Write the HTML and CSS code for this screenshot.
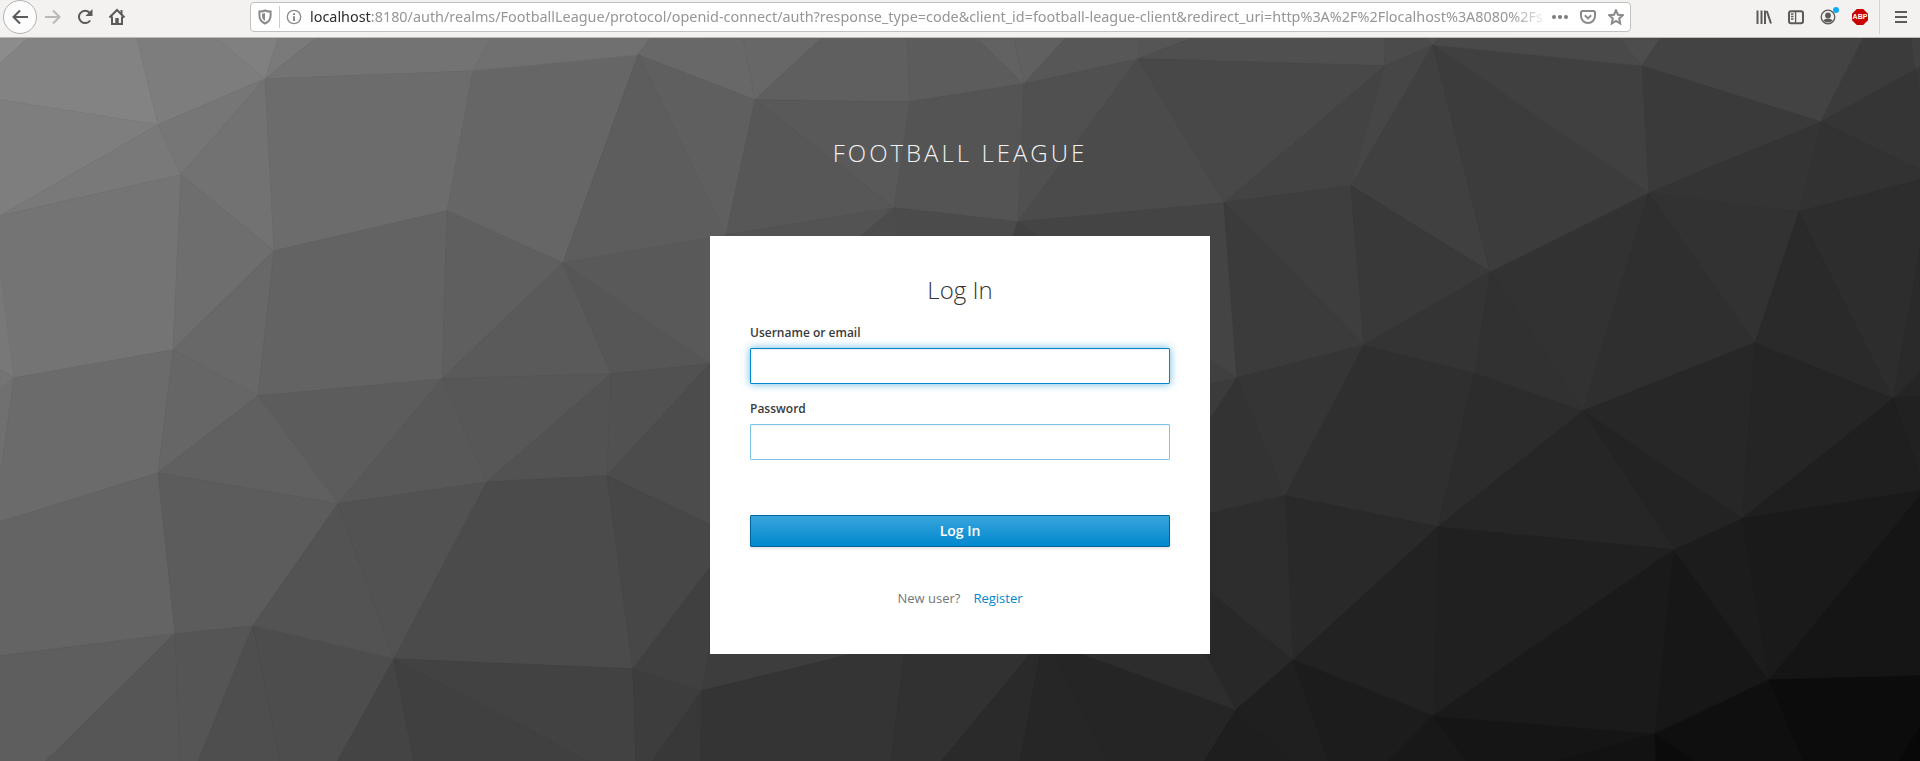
FILE: index.html
```html
<!DOCTYPE html>
<html lang="en">
<head>
<meta charset="utf-8">
<title>Log in to Football League</title>
<link rel="stylesheet" href="styles.css">
</head>
<body>
<header class="toolbar">
  <div class="nav">
    <span class="back"><svg width="18" height="18" viewBox="0 0 18 18" class="ico dark"><path d="M17 9H3M9 2.500L2.500 9L9 15.500"/></svg></span>
    <svg width="18" height="18" viewBox="0 0 18 18" class="ico pale fwd"><path d="M1 9H15M9 2.500L15.500 9L9 15.500"/></svg>
    <svg width="18" height="18" viewBox="0 0 18 18" class="ico dark reload"><path d="M14.200 12.500A6.200 6.200 0 1 1 13.500 4.500"/><path class="solid" d="M16.500 1V8H9.500Z"/></svg>
    <svg width="18" height="18" viewBox="0 0 18 18" class="ico dark home"><path d="M1.500 9.500L9 2L16.500 9.500M4 8.500V16H14V8.500"/><path class="solid" d="M7.300 10H10.700V16H7.300ZM12.500 2H14.500V6H12.500Z"/></svg>
  </div>
  <div class="urlbar">
    <svg width="14" height="16" viewBox="0 0 14 16" class="ico mid shield"><path d="M7 1.500C5 2.300 3 2.600 1.400 2.600V6.500C1.400 10.500 3.500 13 7 14.500C10.500 13 12.600 10.500 12.600 6.500V2.600C11 2.600 9 2.300 7 1.500Z"/><path class="solid" d="M7 4L4 4.800V7C4 9.300 5 10.800 7 12Z"/></svg>
    <span class="divider"></span>
    <svg width="16" height="16" viewBox="0 0 16 16" class="ico mid info"><circle cx="8" cy="8" r="6.700"/><path class="stem" d="M8 7.200V12M8 4.200V6"/></svg>
    <div class="url"><span class="host">localhost</span>:8180/auth/realms/FootballLeague/protocol/openid-connect/auth?response_type=code&amp;client_id=football-league-client&amp;redirect_uri=http%3A%2F%2Flocalhost%3A8080%2Fs</div>
    <svg width="16" height="16" viewBox="0 0 16 16" class="dots"><circle cx="2" cy="8" r="2"/><circle cx="8" cy="8" r="2"/><circle cx="14" cy="8" r="2"/></svg>
    <svg width="16" height="16" viewBox="0 0 16 16" class="ico mid pocket"><path d="M2.500 2H13.500Q15 2 15 3.500V7A7 7 0 0 1 1 7V3.500Q1 2 2.500 2Z"/><path d="M4.800 6.300L8 9.400L11.200 6.300"/></svg>
    <svg width="16" height="16" viewBox="0 0 16 16" class="ico mid star"><path d="M8 1.300L10 5.700L14.900 6.200L11.200 9.400L12.200 14.500L8 12L3.800 14.500L4.800 9.400L1.100 6.200L6 5.700Z"/></svg>
  </div>
  <div class="tools">
    <svg width="16" height="16" viewBox="0 0 16 16" class="ico dark lib"><path d="M1.500 1.500V15M5.500 1.500V15M9 1.500V15M10.800 2L15 14.500"/></svg>
    <svg width="16" height="16" viewBox="0 0 16 16" class="ico dark side"><rect x="1" y="2.200" width="14" height="12" rx="2"/><path class="thin" d="M7.600 2V14M3 5H5.500M3 7.500H5.500M3 10H5.500"/></svg>
    <span class="account">
      <svg width="16" height="16" viewBox="0 0 16 16" class="ico dark"><circle class="thin" cx="8" cy="8" r="6.800"/><circle class="solid" cx="8" cy="6.500" r="2.900"/><path class="solid" d="M3.300 11.500Q5 9.300 8 9.800Q11 9.300 12.700 11.500Q11 13.500 8 13.500Q5 13.500 3.300 11.500Z"/></svg>
      <i class="badge"></i>
    </span>
    <span class="abp">ABP</span>
    <span class="menu"><svg width="14" height="14" viewBox="0 0 14 14" class="ico dark"><path d="M1 2H13M1 7H13M1 12H13"/></svg></span>
  </div>
</header>
<main class="page">
<svg class="mesh" width="1920" height="723" viewBox="0 37.2 1920 723" aria-hidden="true">
<defs><linearGradient id="base"><stop offset="0" stop-color="#858585"/><stop offset="1" stop-color="#3b3b3b"/></linearGradient></defs>
<rect x="0" y="37" width="1920" height="3" fill="url(#base)"/>
<rect x="840" y="600" width="400" height="161" fill="#262626"/>
<g id="facets"></g>
</svg>
<div class="content">
  <div class="brand">FOOTBALL LEAGUE</div>
  <form class="card">
    <h1>Log In</h1>
    <label for="user">Username or email</label>
    <input id="user" class="focused" type="text">
    <label for="pass">Password</label>
    <input id="pass" type="password">
    <button type="button">Log In</button>
    <p class="signup"><span>New user?</span><a href="#">Register</a></p>
  </form>
</div>
</main>
<script src="mesh.js"></script>
</body>
</html>
```
FILE: styles.css
```css
* { box-sizing: border-box; }
body { margin: 0; width: 1920px; height: 761px; overflow: hidden; font-family: "Open Sans", sans-serif; background: #333; }

.toolbar { display: flex; align-items: flex-start; height: 38px; background: #f3f2f0; border-bottom: 1px solid #bdbbb8; }
.ico { fill: none; stroke-width: 2; display: block; flex: none; }
.ico.dark { stroke: #5c5b59; color: #5c5b59; }
.ico.mid { stroke: #8a8a8a; color: #8a8a8a; }
.ico.pale { stroke: #b9b8b6; }
.ico .solid { fill: currentColor; stroke: none; }
.ico .thin { stroke-width: 1.3; }

.nav { display: flex; align-items: center; width: 250px; height: 34px; padding-left: 3px; }
.back { display: flex; align-items: center; justify-content: center; width: 34px; height: 34px; border: 1px solid #b4b3b1; border-radius: 50%; background: #fcfcfc; }
.fwd { margin-left: 7px; }
.reload { margin-left: 14px; }
.home { margin-left: 14px; }
.home path { stroke-width: 2; }

.urlbar { display: flex; align-items: center; width: 1381px; height: 30px; margin-top: 2px; padding-left: 7px; background: #fff; border: 1px solid #c3c1be; border-radius: 4px; }
.divider { width: 1px; height: 22px; margin: 0 6px 0 7px; background: #ccc; }
.ico.info { stroke-width: 1.3; }
.info .stem { stroke-width: 2; }
.url { width: 1240px; margin-left: 8px; overflow: hidden; white-space: nowrap; font: 14.4px/26px "Noto Sans", sans-serif; color: #969696; mask-image: linear-gradient(to right, #000 1200px, transparent 1240px); }
.host { color: #2c2c2c; }
.dots { fill: #7b7b7b; flex: none; margin-left: 2px; }
.pocket { margin-left: 12px; }
.star { margin-left: 12px; }

.tools { display: flex; align-items: center; height: 34px; margin-left: 125px; }
.side { margin-left: 16px; }
.account { position: relative; margin-left: 16px; }
.badge { position: absolute; right: -3px; top: -2px; width: 6px; height: 6px; border-radius: 50%; background: #0aacf5; }
.abp { display: flex; align-items: center; justify-content: center; width: 16px; height: 16px; margin-left: 16px; background: #c80000; color: #fff; font: bold 7px/16px "Liberation Sans", sans-serif; clip-path: polygon(30% 0, 70% 0, 100% 30%, 100% 70%, 70% 100%, 30% 100%, 0 70%, 0 30%); }
.menu { display: flex; align-items: center; height: 34px; margin-left: 11px; padding-left: 14px; border-left: 1px solid #d5d3d1; }

.page { display: grid; width: 1920px; height: 723px; }
.mesh, .content { grid-area: 1 / 1; }
.mesh { display: block; }
.content { z-index: 1; display: flex; flex-direction: column; align-items: center; padding-top: 98px; }
.brand { height: 100px; font-size: 24px; font-weight: 300; line-height: 34px; letter-spacing: 3px; color: #f2f2f2; }
.card { display: flex; flex-direction: column; width: 500px; height: 418px; padding: 36px 40px 0; background: #fff; }
.card h1 { margin: 0 0 15px; text-align: center; font-size: 24px; font-weight: 300; line-height: 36px; color: #333; }
.card label { height: 25px; font-size: 12px; font-weight: 600; line-height: 20px; color: #3a3c3e; }
.card input { width: 420px; height: 36px; margin: 0 0 15px; padding: 0 8px; border: 1px solid #7dc3e8; border-radius: 1px; background: #fff; box-shadow: inset 0 1px 1px rgba(3, 3, 3, .05); outline: none; }
.card input.focused { border-color: #0088ce; box-shadow: inset 0 1px 1px rgba(3, 3, 3, .075), 0 0 8px rgba(0, 136, 206, .6); }
.card button { height: 32px; margin-top: 40px; padding: 0; border: 1px solid #00659c; border-radius: 1px; background: linear-gradient(#39a5dc, #0088ce); box-shadow: 0 2px 3px rgba(3, 3, 3, .1); font: 600 14px/28px "Open Sans", sans-serif; color: #fff; }
.signup { display: flex; justify-content: center; gap: 13px; margin: 41px 0 0; font-size: 13px; line-height: 21px; color: #72767b; }
.signup a { color: #0088ce; text-decoration: none; }
```
FILE: mesh.js
```javascript
// Each facet: grey level, then its corner points.
const facets = `
8c 0,38 27,38 0,63
83 27,38 137,38 158,124 0,99 0,63
7e 0,99 158,124 0,215
79 158,124 181,174 0,215
7d 137,38 217,38 265,78 158,124
80 217,38 278,38 265,78
7a 278,38 315,38 265,78
76 158,124 265,78 181,174
72 265,78 274,250 181,174
73 315,38 490,38 473,70 265,78
6c 265,78 473,70 447,210 274,250
74 0,215 181,174 173,349 14,377 0,270
78 0,270 14,377 0,369
74 0,369 14,377 0,389
70 0,389 14,377 0,476
6e 181,174 274,250 173,349
68 173,349 274,250 258,395
63 274,250 447,210 442,378 258,395
66 473,70 638,54 563,262 447,210
5f 447,210 563,262 442,378
5a 442,378 563,262 611,373
56 563,262 611,373 710,363
59 563,262 726,234 726,363 710,363
6b 14,377 173,349 158,472 0,521 0,476
66 173,349 258,395 158,472
5c 258,395 442,378 338,503
60 258,395 338,503 158,472
58 442,378 338,503 487,481
57 442,378 611,373 487,481
52 611,373 487,481 607,475
51 611,373 710,363 607,475
4c 710,363 710,524 607,475
64 158,472 175,633 0,655 0,521
5c 158,472 338,503 253,625 175,633
5e 0,655 175,633 45,761 0,761
56 175,633 45,761 180,761
55 175,633 253,625 198,761 180,761
4e 253,625 198,761 280,761
4d 253,625 394,658 337,761 280,761
53 338,503 253,625 394,658
52 338,503 487,481 394,658
4b 487,481 607,475 633,668 394,658
47 607,475 633,668 710,566 710,524
44 394,658 337,761 414,761
40 394,658 414,761 590,761
42 394,658 633,668 636,761 590,761
3d 633,668 702,690 652,761 636,761
38 702,690 652,761 701,761
40 633,668 702,690 709,654 710,566
3d 702,690 709,650 848,650 848,654
34 702,690 848,654 848,650 905,650 891,761 701,761
31 905,650 1033,650 941,761 891,761
2a 1033,650 1041,650 1020,761 941,761
26 1041,650 1053,650 1108,761 1020,761
25 1053,650 1073,650 1236,709 1204,761 1108,761
2d 1073,650 1204,650 1236,709
70 473,70 490,38 650,38 638,54
68 638,54 650,38 743,38 755,99
67 755,99 743,38 821,38
5f 755,99 821,38 907,38 910,101
5c 910,101 907,38 977,38 1024,83
62 1024,83 977,38 1014,38
60 1024,83 1014,38 1065,38
57 1024,83 1065,38 1140,38 1138,58
55 1138,58 1140,38 1190,38
4f 1138,58 1190,38 1384,38 1385,65
4b 1385,65 1384,38 1427,38 1433,44
50 1433,44 1427,38 1438,38
5f 638,54 755,99 726,234
5d 638,54 726,234 563,262
59 755,99 910,101 894,207
57 755,99 894,207 726,234
54 910,101 1024,83 1018,221 894,207
50 1024,83 1138,58 1018,221
4b 1138,58 1224,202 1018,221
48 1138,58 1385,65 1224,202
43 1385,65 1351,185 1224,202
46 1385,65 1433,44 1351,185
40 1433,44 1351,185 1490,271
53 726,234 894,207 858,238 726,238
4c 894,207 858,238 899,238
4b 894,207 1018,221 1012,238 899,238
41 1018,221 1012,238 1042,238
44 1018,221 1224,202 1237,377 1210,359 1208,238 1042,238
3b 1224,202 1237,377 1364,344
3e 1224,202 1351,185 1364,344
39 1351,185 1364,344 1490,271
40 1208,357 1237,377 1208,384
3b 1208,384 1237,377 1208,422
33 1237,377 1285,495 1208,513 1208,422
35 1237,377 1285,495 1364,344
2f 1364,344 1475,372 1438,526 1285,495
34 1364,344 1490,271 1475,372
2c 1475,372 1583,410 1438,526
31 1490,271 1475,372 1583,410
32 1490,271 1649,192 1583,410
2f 1649,192 1755,342 1583,410
3c 1433,44 1490,271 1649,192
40 1433,44 1642,65 1649,192
49 1433,44 1438,38 1620,38 1642,65
4d 1642,65 1620,38 1660,38
43 1642,65 1660,38 1863,38 1821,121
3a 1642,65 1821,121 1649,192
3b 1821,121 1863,38 1911,38 1915,69
40 1915,69 1911,38 1920,38 1920,66
38 1915,69 1920,66 1920,95
35 1821,121 1915,69 1920,95 1920,169
32 1821,121 1799,211 1920,179 1920,169
34 1649,192 1821,121 1799,211
32 1649,192 1799,211 1755,342
2a 1799,211 1755,342 1893,398
2d 1799,211 1920,179 1920,250 1893,398
2a 1893,398 1920,250 1920,372
25 1893,398 1920,372 1920,395
21 1893,398 1920,395 1920,475
25 1755,342 1893,398 1742,518
27 1755,342 1742,518 1583,410
23 1583,410 1742,518 1674,549
1f 1893,398 1742,518 1920,490 1920,475
26 1438,526 1583,410 1674,549
20 1438,526 1674,549 1433,715
29 1285,495 1438,526 1293,659
22 1438,526 1433,715 1293,659
2d 1285,495 1208,513 1208,590 1293,659
28 1293,659 1208,590 1204,650 1236,709
1f 1236,709 1293,659 1329,761 1290,761
1e 1236,709 1290,761 1204,761
1c 1293,659 1433,715 1388,761 1329,761
18 1433,715 1388,761 1467,761
15 1433,715 1655,733 1555,761 1467,761
12 1655,733 1555,761 1656,761
1a 1674,549 1433,715 1655,733
17 1674,549 1655,733 1769,679
1c 1674,549 1742,518 1769,679
1a 1742,518 1769,679 1920,495 1920,490
15 1769,679 1920,495 1920,675
0f 1655,733 1769,679 1804,761 1695,761
0b 1655,733 1656,761 1695,761
0c 1769,679 1920,675 1920,727 1898,761 1804,761
08 1920,727 1898,761 1920,761`;

document.getElementById("facets").innerHTML = facets.trim().split("\n").map(line => {
  const grey = line.slice(0, 2);
  const fill = "#" + grey + grey + grey;
  return `<polygon points="${line.slice(3)}" fill="${fill}" stroke="${fill}" stroke-width="0.6"/>`;
}).join("");
```
